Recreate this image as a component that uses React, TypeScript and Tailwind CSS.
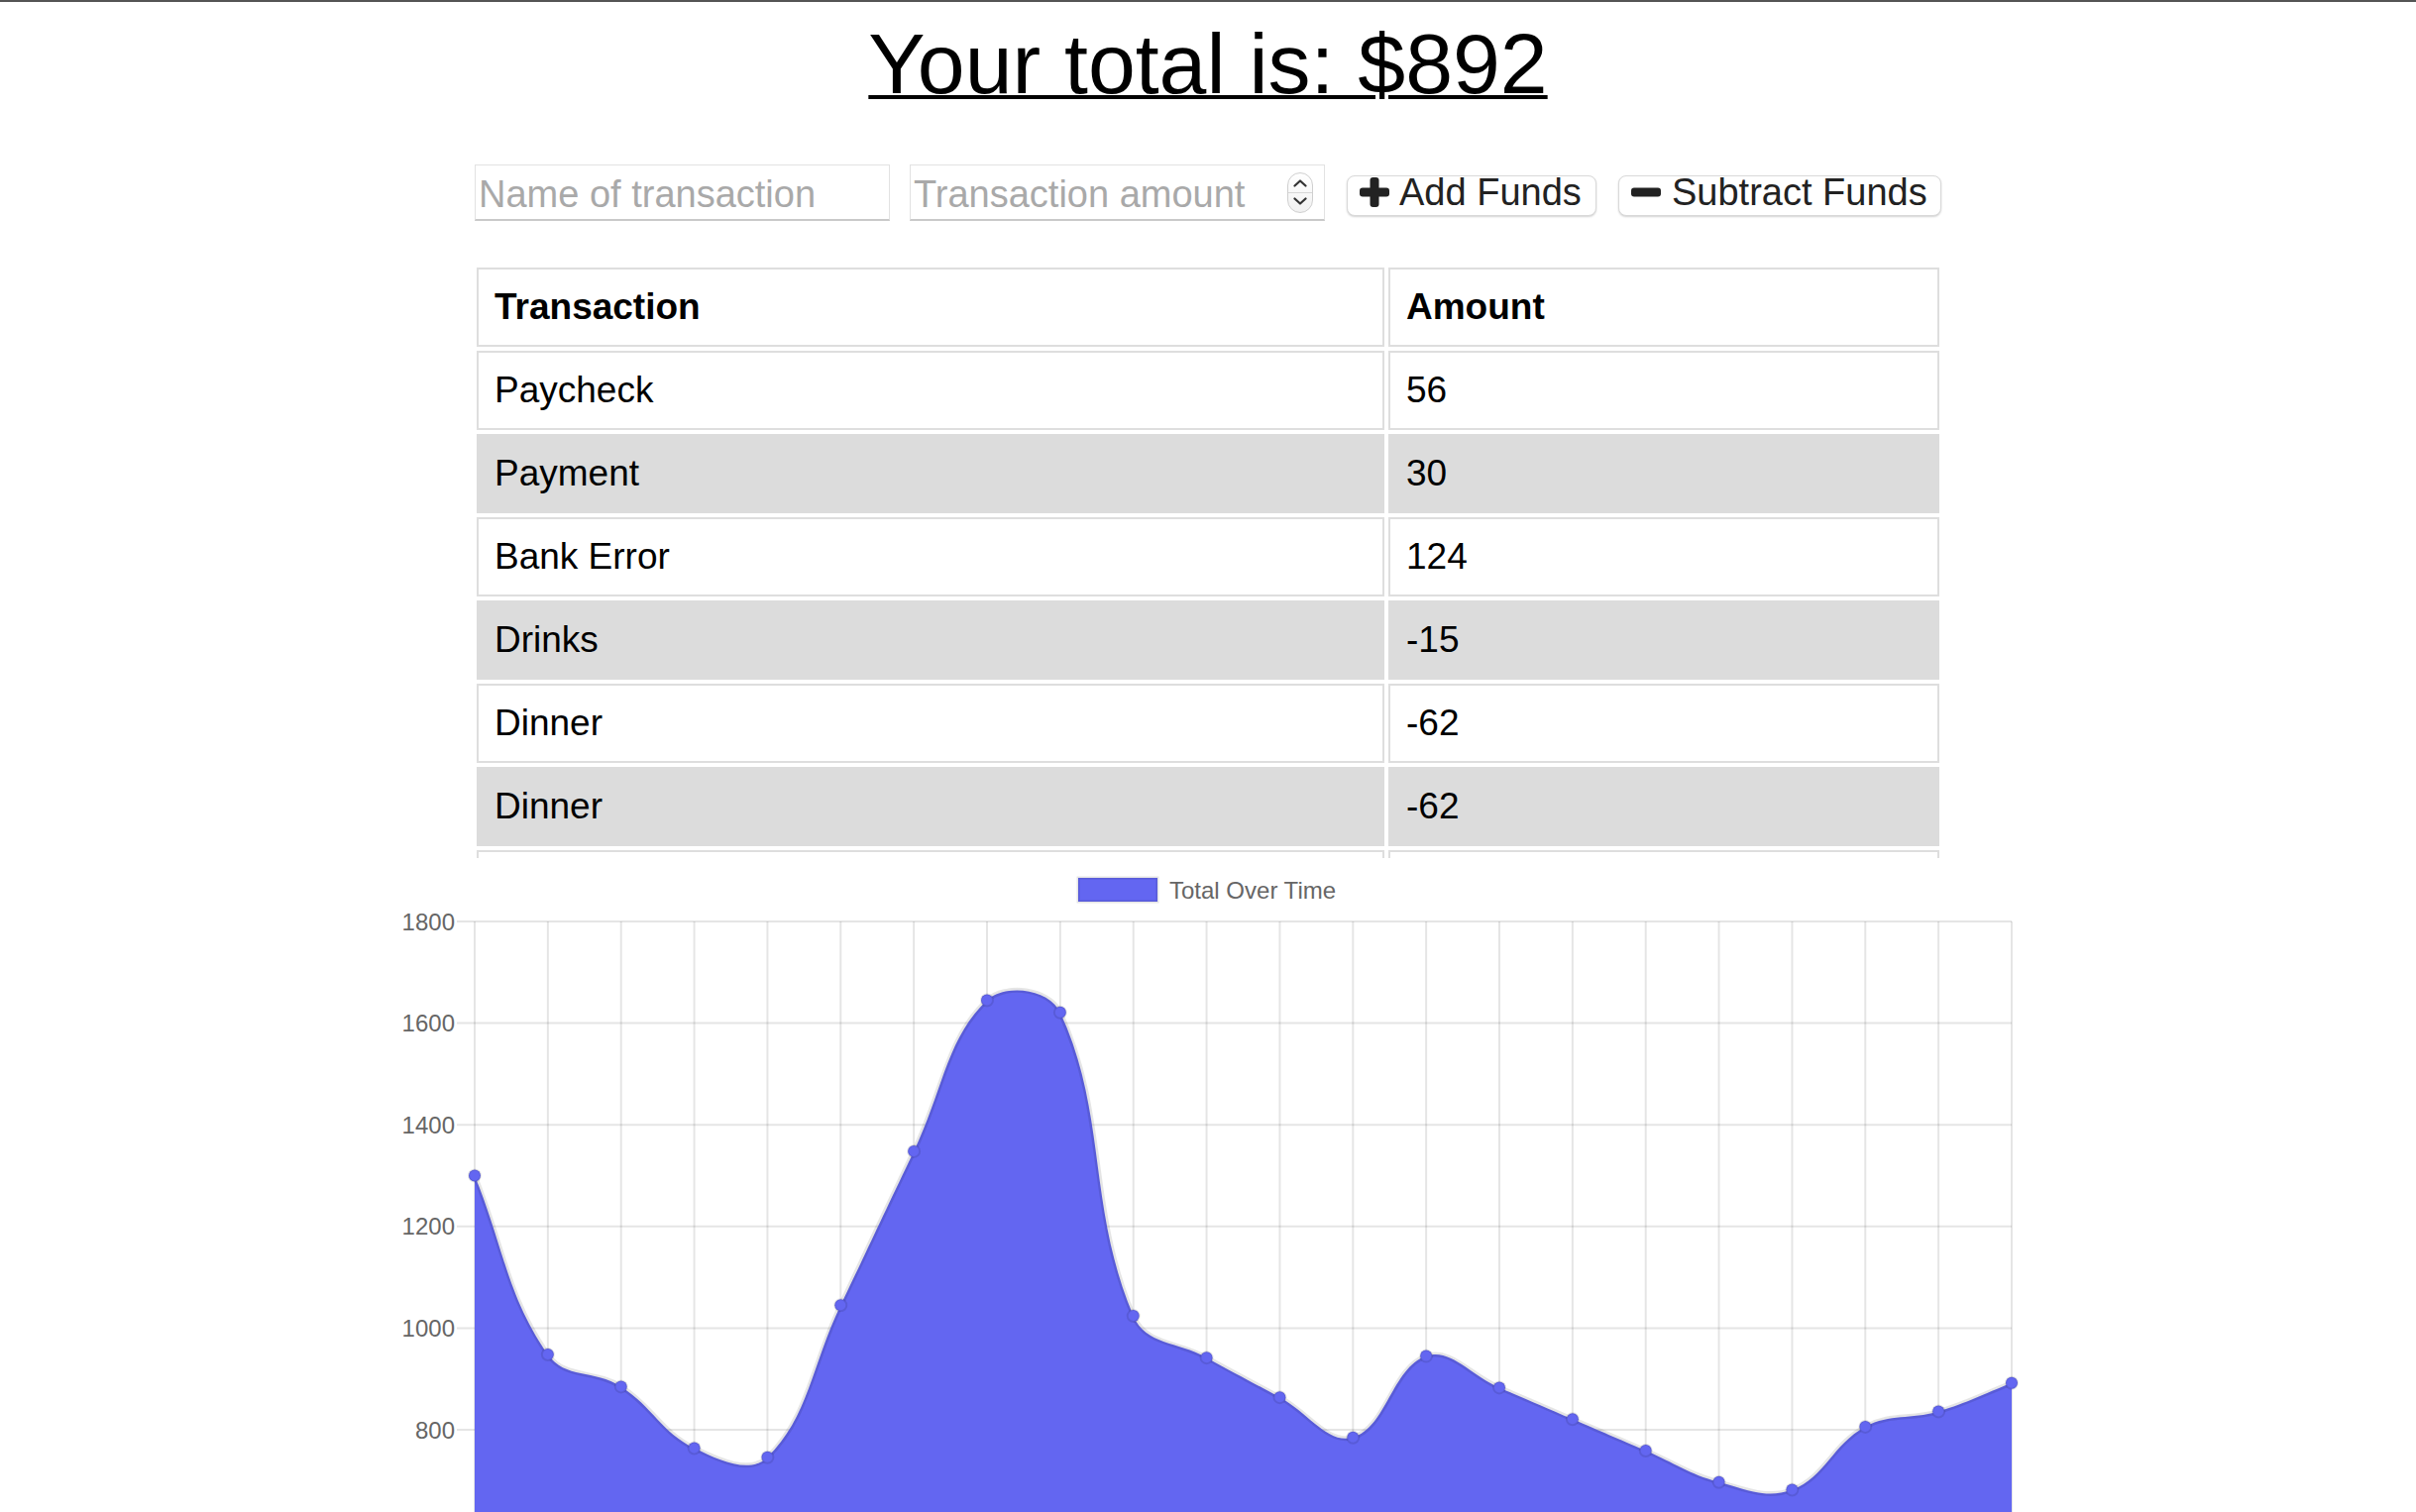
import React from 'react'

type Txn = { name: string; value: number }

const TRANSACTIONS: Txn[] = [
  { name: 'Paycheck', value: 56 },
  { name: 'Payment', value: 30 },
  { name: 'Bank Error', value: 124 },
  { name: 'Drinks', value: -15 },
  { name: 'Dinner', value: -62 },
  { name: 'Dinner', value: -62 },
  { name: 'Dinner', value: -62 },
]

// running total, oldest first
const TOTALS = [1300, 948, 885, 764, 746, 1045, 1348, 1645, 1621, 1024, 942, 864, 785, 945, 883, 821, 759, 697, 682, 806, 836, 892]

const FILL = '#6366f1'

const CHART_W = 1700
const CHART_H = 760
const LEFT = 110
const RIGHT = 1661
const TOP = 64
const BOTTOM = TOP + 6 * 102.6
const TICKS = [1800, 1600, 1400, 1200, 1000, 800, 600]

const yFor = (v: number) => TOP + ((1800 - v) * (BOTTOM - TOP)) / 1200
const xFor = (i: number) => LEFT + (i * (RIGHT - LEFT)) / (TOTALS.length - 1)

type Pt = { x: number; y: number }

// same spline chart.js uses (tension 0.4, capped to chart area)
function splinePath(pts: Pt[]) {
  const t = 0.4
  const capX = (x: number) => Math.max(LEFT, Math.min(RIGHT, x))
  const capY = (y: number) => Math.max(TOP, Math.min(BOTTOM, y))
  const cps = pts.map((p, i) => {
    const prev = pts[i - 1] ?? p
    const next = pts[i + 1] ?? p
    const d01 = Math.hypot(p.x - prev.x, p.y - prev.y)
    const d12 = Math.hypot(next.x - p.x, next.y - p.y)
    const s01 = d01 + d12 === 0 ? 0 : d01 / (d01 + d12)
    const s12 = d01 + d12 === 0 ? 0 : d12 / (d01 + d12)
    const fa = t * s01
    const fb = t * s12
    return {
      prev: { x: capX(p.x - fa * (next.x - prev.x)), y: capY(p.y - fa * (next.y - prev.y)) },
      next: { x: capX(p.x + fb * (next.x - prev.x)), y: capY(p.y + fb * (next.y - prev.y)) },
    }
  })
  let d = `M${pts[0].x},${pts[0].y}`
  for (let i = 1; i < pts.length; i++) {
    d += ` C${cps[i - 1].next.x},${cps[i - 1].next.y} ${cps[i].prev.x},${cps[i].prev.y} ${pts[i].x},${pts[i].y}`
  }
  return d
}

function TotalChart() {
  const pts = TOTALS.map((v, i) => ({ x: xFor(i), y: yFor(v) }))
  const line = splinePath(pts)
  const area = `${line} L${pts[pts.length - 1].x},${BOTTOM} L${pts[0].x},${BOTTOM} Z`

  return (
    <svg width={CHART_W} height={CHART_H} viewBox={`0 0 ${CHART_W} ${CHART_H}`} className="block mx-auto shrink-0">
      {/* legend */}
      <rect x={719} y={20} width={80} height={24} fill={FILL} stroke="rgba(0,0,0,0.1)" strokeWidth={3} />
      <text x={811} y={40.5} fontSize={24} fill="#666" fontFamily="'Liberation Sans', Arial, sans-serif">
        Total Over Time
      </text>

      {/* grid */}
      {TICKS.map(v => (
        <line key={v} x1={LEFT - 18} x2={RIGHT} y1={yFor(v)} y2={yFor(v)} stroke="rgba(0,0,0,0.1)" strokeWidth={2} />
      ))}
      {pts.map((p, i) => (
        <line key={i} x1={p.x} x2={p.x} y1={TOP} y2={BOTTOM + 18} stroke="rgba(0,0,0,0.1)" strokeWidth={2} />
      ))}
      {TICKS.map(v => (
        <text
          key={v}
          x={LEFT - 20}
          y={yFor(v) + 8.5}
          textAnchor="end"
          fontSize={24}
          fill="#666"
          fontFamily="'Liberation Sans', Arial, sans-serif"
        >
          {v}
        </text>
      ))}

      {/* dataset */}
      <path d={area} fill={FILL} />
      <path d={line} fill="none" stroke="rgba(0,0,0,0.1)" strokeWidth={5} />
      {pts.map((p, i) => (
        <circle key={i} cx={p.x} cy={p.y} r={6} fill={FILL} stroke="rgba(0,0,0,0.1)" strokeWidth={2} />
      ))}
    </svg>
  )
}

function PlusIcon() {
  return (
    <svg width="30" height="30" viewBox="0 0 30 30" className="shrink-0">
      <rect x="10.5" y="0" width="9" height="30" rx="3" fill="#222" />
      <rect x="0" y="10.5" width="30" height="9" rx="3" fill="#222" />
    </svg>
  )
}

function MinusIcon() {
  return (
    <svg width="30" height="30" viewBox="0 0 30 30" className="shrink-0">
      <rect x="0" y="10.5" width="30" height="9" rx="3" fill="#222" />
    </svg>
  )
}

function Spinner() {
  return (
    <div className="mr-[11px] flex h-[41px] w-[26px] shrink-0 flex-col overflow-hidden rounded-[13px] border border-[#cfcfcf] bg-gradient-to-b from-white to-[#f1f1f1]">
      <div className="flex flex-1 items-center justify-center border-b border-[#d6d6d6] pt-[2px]">
        <svg width="14" height="8" viewBox="0 0 14 8">
          <path d="M1.5 6.5 L7 1.5 L12.5 6.5" fill="none" stroke="#333" strokeWidth="2.2" strokeLinecap="round" strokeLinejoin="round" />
        </svg>
      </div>
      <div className="flex flex-1 items-center justify-center pb-[2px]">
        <svg width="14" height="8" viewBox="0 0 14 8">
          <path d="M1.5 1.5 L7 6.5 L12.5 1.5" fill="none" stroke="#333" strokeWidth="2.2" strokeLinecap="round" strokeLinejoin="round" />
        </svg>
      </div>
    </div>
  )
}

export default function App() {
  return (
    <div className="h-screen overflow-hidden bg-white font-['Liberation_Sans',Arial,Helvetica,sans-serif] text-black">
      <div className="h-[2px] bg-[#555]" />

      <h1 className="mt-[19px] text-center text-[86px] font-normal leading-[86px] underline decoration-[4px] underline-offset-[2px]">
        Your total is: $892
      </h1>

      <div className="mt-[59px] flex items-start justify-center">
        <input
          type="text"
          placeholder="Name of transaction"
          className="h-[57px] w-[419px] border border-[#e2e2e2] border-b-2 border-b-[#c9c9c9] pl-[3px] pt-[4px] text-[38px] outline-none placeholder:text-[#a9a9a9]"
        />
        <div className="ml-[20px] flex h-[57px] w-[419px] items-center border border-[#e2e2e2] border-b-2 border-b-[#c9c9c9]">
          <input
            type="text"
            placeholder="Transaction amount"
            className="h-full min-w-0 flex-1 pl-[3px] pt-[4px] text-[38px] outline-none placeholder:text-[#a9a9a9]"
          />
          <Spinner />
        </div>
        <button className="ml-[22px] mt-[11px] flex h-[41px] w-[252px] items-center gap-[10px] rounded-[8px] border border-[#d9d9d9] bg-white pb-[7px] pl-[12px] text-[38px] leading-[38px] text-[#222] shadow-[0_1px_2px_rgba(0,0,0,0.18)]">
          <PlusIcon />
          <span>Add Funds</span>
        </button>
        <button className="ml-[22px] mt-[11px] flex h-[41px] w-[326px] items-center gap-[11px] rounded-[8px] border border-[#d9d9d9] bg-white pb-[7px] pl-[12px] text-[38px] leading-[38px] text-[#222] shadow-[0_1px_2px_rgba(0,0,0,0.18)]">
          <MinusIcon />
          <span>Subtract Funds</span>
        </button>
      </div>

      <div className="mx-auto mt-[43px] h-[600px] w-[1484px] overflow-hidden">
        <table className="w-full table-fixed border-separate border-spacing-[4px] text-[37px]">
          <thead>
            <tr>
              <th className="w-[916px] h-[80px] border-2 border-[#dedede] px-[16px] text-left font-bold leading-[76px]">Transaction</th>
              <th className="w-[556px] h-[80px] border-2 border-[#dedede] px-[16px] text-left font-bold leading-[76px]">Amount</th>
            </tr>
          </thead>
          <tbody>
            {TRANSACTIONS.map((t, i) => (
              <tr key={i} className={i % 2 === 1 ? 'bg-[#dcdcdc]' : 'bg-white'}>
                <td className={`h-[80px] border-2 px-[16px] leading-[76px] ${i % 2 === 1 ? 'border-[#dcdcdc]' : 'border-[#dedede]'}`}>{t.name}</td>
                <td className={`h-[80px] border-2 px-[16px] leading-[76px] ${i % 2 === 1 ? 'border-[#dcdcdc]' : 'border-[#dedede]'}`}>{t.value}</td>
              </tr>
            ))}
          </tbody>
        </table>
      </div>

      <TotalChart />
    </div>
  )
}
